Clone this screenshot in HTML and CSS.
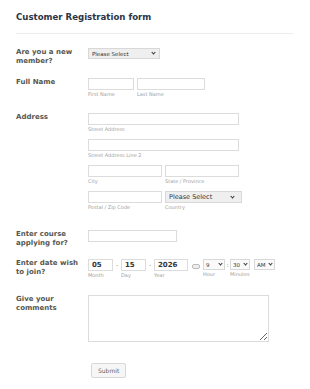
FILE: index.html
```html
<!DOCTYPE html>
<html lang="en">
<head>
  <meta charset="UTF-8">
  <meta name="viewport" content="width=device-width, initial-scale=1.0">
  <title>Customer Registration form</title>
  <link rel="stylesheet" href="styles.css">
</head>
<body>

<section class="form-all">
  <h1 class="form-header">Customer Registration form</h1>

  <div class="form-line line-member">
    <label class="form-label">Are you a new member?</label>
    <div class="form-input">
      <span class="select-wrap">
        <select class="select-sm select-member">
          <option>Please Select</option>
        </select>
      </span>
    </div>
  </div>

  <div class="form-line line-name">
    <label class="form-label">Full Name</label>
    <div class="form-input field-row">
      <span class="field">
        <input class="text-sm w-first">
        <small>First Name</small>
      </span>
      <span class="field">
        <input class="text-sm w-last">
        <small>Last Name</small>
      </span>
    </div>
  </div>

  <div class="form-line line-address">
    <label class="form-label">Address</label>
    <div class="form-input address-grid">
      <span class="field wide">
        <input class="text-sm">
        <small>Street Address</small>
      </span>
      <span class="field wide">
        <input class="text-sm">
        <small>Street Address Line 2</small>
      </span>
      <span class="field">
        <input class="text-sm">
        <small>City</small>
      </span>
      <span class="field">
        <input class="text-sm">
        <small>State / Province</small>
      </span>
      <span class="field">
        <input class="text-sm">
        <small>Postal / Zip Code</small>
      </span>
      <span class="field">
        <span class="select-wrap wrap-country">
          <select class="select-sm select-country">
            <option>Please Select</option>
          </select>
        </span>
        <small>Country</small>
      </span>
    </div>
  </div>

  <div class="form-line line-course">
    <label class="form-label">Enter course applying for?</label>
    <div class="form-input">
      <input class="text-sm w-course">
    </div>
  </div>

  <div class="form-line line-date">
    <label class="form-label">Enter date wish to join?</label>
    <div class="form-input date-row">
      <span class="field">
        <input class="text-sm date-in w-mm" value="05">
        <small>Month</small>
      </span>
      <span class="sep">-</span>
      <span class="field">
        <input class="text-sm date-in w-mm" value="15">
        <small>Day</small>
      </span>
      <span class="sep">-</span>
      <span class="field">
        <input class="text-sm date-in w-yy" value="2026">
        <small>Year</small>
      </span>
      <span class="cal-icon"></span>
      <span class="field">
        <span class="select-wrap">
          <select class="select-sm select-time w-hour">
            <option>9</option>
          </select>
        </span>
        <small>Hour</small>
      </span>
      <span class="sep colon">:</span>
      <span class="field">
        <span class="select-wrap">
          <select class="select-sm select-time w-min">
            <option>30</option>
          </select>
        </span>
        <small>Minutes</small>
      </span>
      <span class="field ampm">
        <span class="select-wrap">
          <select class="select-sm select-time w-ampm">
            <option>AM</option>
          </select>
        </span>
      </span>
    </div>
  </div>

  <div class="form-line line-comments">
    <label class="form-label">Give your comments</label>
    <div class="form-input">
      <textarea class="comments"></textarea>
    </div>
  </div>

  <div class="form-line line-submit">
    <button class="submit-btn">Submit</button>
  </div>
</section>

</body>
</html>
```

FILE: styles.css
```css
/* Basic page */
body {
  margin: 0;
  background: #fff;
  font-family: "DejaVu Sans", Verdana, sans-serif;
}
.form-all {
  width: 277px;
  padding: 12px 0 0 16px;
}
.form-header {
  margin: 0 0 14px;
  padding-bottom: 11px;
  font-size: 8.6px;
  font-weight: bold;
  color: #2c3345;
  border-bottom: 1px solid #ececec;
}

/* Rows */
.form-line {
  display: flex;
  align-items: flex-start;
}
.form-label {
  width: 72px;
  flex-shrink: 0;
  padding-right: 6px;
  box-sizing: border-box;
  font-size: 7px;
  line-height: 9px;
  font-weight: bold;
  color: #57574f;
}
.line-member { margin-bottom: 12px; }
.line-name { margin-bottom: 14px; }
.line-address { margin-bottom: 18px; }
.line-course { margin-bottom: 11px; }
.line-date { margin-bottom: 15px; }
.line-comments { margin-bottom: 21px; }
.line-submit { padding-left: 75px; }

/* Inputs */
.text-sm {
  display: block;
  box-sizing: border-box;
  height: 12px;
  margin: 0;
  padding: 0 3px;
  border: 1px solid #dcdcdc;
  background: #fff;
  font-family: inherit;
  font-size: 7px;
  color: #333;
  outline: none;
}

/* Selects with a small chevron */
.select-wrap {
  position: relative;
  display: block;
}
.select-wrap::after {
  content: "";
  position: absolute;
  right: 5px;
  top: 3px;
  width: 2px;
  height: 2px;
  border-right: 1px solid #333;
  border-bottom: 1px solid #333;
  transform: rotate(45deg);
  pointer-events: none;
}
.wrap-country::after { top: 3.5px; }
.select-sm {
  -webkit-appearance: none;
  appearance: none;
  display: block;
  box-sizing: border-box;
  height: 11px;
  margin: 0;
  padding: 0 0 0 3px;
  border: 1px solid #d8d8d8;
  border-radius: 0;
  background: #efefef;
  font-family: inherit;
  font-size: 5.5px;
  color: #333;
}
.select-member { width: 72px; }
.select-country {
  width: 77px;
  height: 12px;
  font-size: 6.5px;
}

.field {
  display: flex;
  flex-direction: column;
}
.field small {
  box-sizing: border-box;
  height: 9px;
  padding-top: 1px;
  font-size: 5px;
  line-height: 7px;
  color: #a0a0a0;
}
.field-row {
  display: flex;
  gap: 3px;
}
.w-first { width: 46px; }
.w-last { width: 68px; }

.address-grid {
  display: grid;
  grid-template-columns: 74px 74px;
  column-gap: 3px;
  row-gap: 5px;
}
.address-grid .wide { grid-column: span 2; }
.address-grid .text-sm { width: 100%; }

.w-course { width: 89px; }

/* Date */
.date-row {
  display: flex;
  align-items: flex-start;
}
.date-in {
  font-weight: bold;
  font-size: 7px;
  color: #333;
}
.w-mm { width: 25px; }
.w-yy { width: 34px; }
.sep {
  width: 8px;
  height: 12px;
  font-size: 6px;
  line-height: 12px;
  text-align: center;
  color: #888;
}
.colon { width: 5px; }
.cal-icon {
  width: 6px;
  height: 3px;
  margin: 5px 3px 0 4px;
  border: 1px solid #bbb;
  border-radius: 2px;
  background: #eee;
}
.select-time {
  height: 11px;
  padding-left: 2px;
  background: #fafafa;
  font-size: 5.5px;
}
.w-hour { width: 22px; }
.w-min { width: 20px; }
.w-ampm { width: 21px; }
.ampm { margin-left: 4px; }
.date-row .select-wrap::after { right: 3px; }

/* Comments */
.comments {
  display: block;
  box-sizing: border-box;
  width: 181px;
  height: 47px;
  margin: 0;
  border: 1px solid #dcdcdc;
  font-family: inherit;
  font-size: 7px;
}

.submit-btn {
  height: 15px;
  padding: 0 6px;
  border: 1px solid #d8d8d8;
  border-radius: 2px;
  background: #f6f6f6;
  font-family: inherit;
  font-size: 6px;
  color: #666;
}
```
